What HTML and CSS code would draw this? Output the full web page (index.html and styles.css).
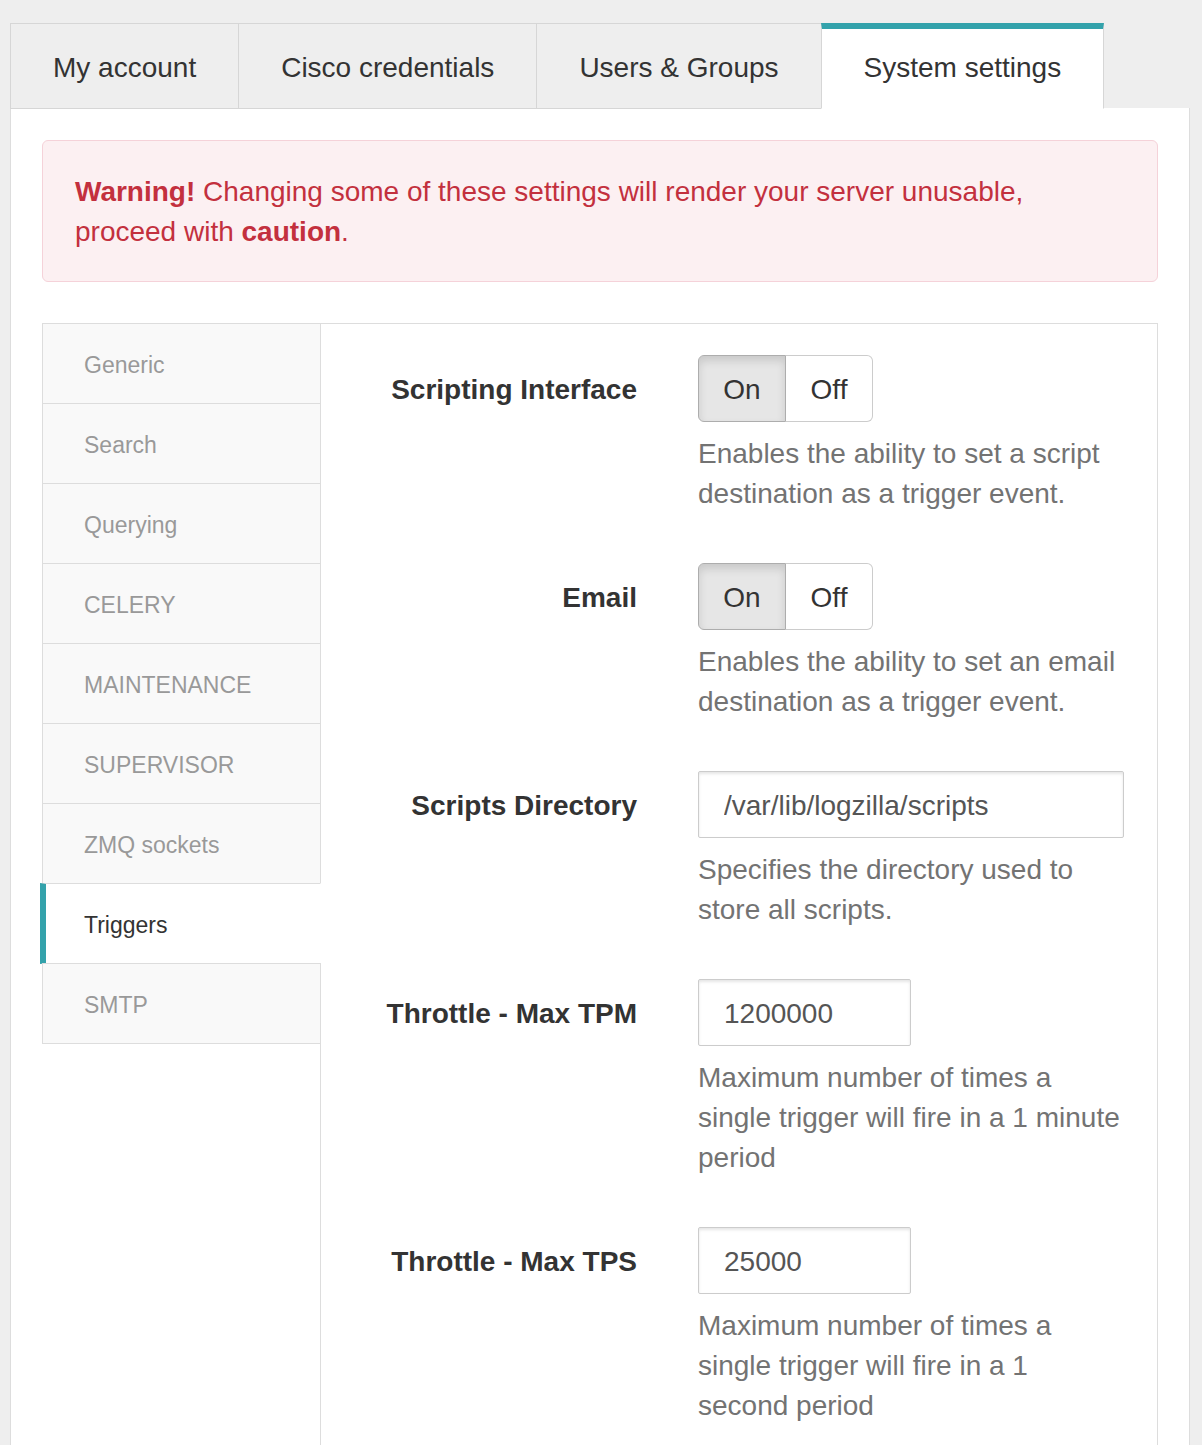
FILE: index.html
```html
<!DOCTYPE html>
<html lang="en">
<head>
<meta charset="utf-8">
<title>System settings</title>
<link rel="stylesheet" href="styles.css">
</head>
<body>
<div class="page">
  <nav class="tabs">
    <a class="tab">My account</a>
    <a class="tab">Cisco credentials</a>
    <a class="tab">Users &amp; Groups</a>
    <a class="tab active">System settings</a>
  </nav>
  <div class="panel">
    <div class="alert">
      <strong>Warning!</strong> Changing some of these settings will render your server unusable, proceed with <strong>caution</strong>.
    </div>
    <div class="settings">
      <ul class="side">
        <li class="side-item">Generic</li>
        <li class="side-item">Search</li>
        <li class="side-item">Querying</li>
        <li class="side-item">CELERY</li>
        <li class="side-item">MAINTENANCE</li>
        <li class="side-item">SUPERVISOR</li>
        <li class="side-item">ZMQ sockets</li>
        <li class="side-item active">Triggers</li>
        <li class="side-item">SMTP</li>
      </ul>
      <div class="pane">
        <div class="group">
          <label class="label">Scripting Interface</label>
          <div class="control">
            <div class="toggle">
              <span class="btn on">On</span><span class="btn">Off</span>
            </div>
            <p class="help">Enables the ability to set a script destination as a trigger event.</p>
          </div>
        </div>
        <div class="group">
          <label class="label">Email</label>
          <div class="control">
            <div class="toggle">
              <span class="btn on">On</span><span class="btn">Off</span>
            </div>
            <p class="help">Enables the ability to set an email destination as a trigger event.</p>
          </div>
        </div>
        <div class="group">
          <label class="label">Scripts Directory</label>
          <div class="control">
            <input class="input wide" type="text" value="/var/lib/logzilla/scripts">
            <p class="help">Specifies the directory used to store all scripts.</p>
          </div>
        </div>
        <div class="group">
          <label class="label">Throttle - Max TPM</label>
          <div class="control">
            <input class="input short" type="text" value="1200000">
            <p class="help">Maximum number of times a single trigger will fire in a 1 minute period</p>
          </div>
        </div>
        <div class="group">
          <label class="label">Throttle - Max TPS</label>
          <div class="control">
            <input class="input short" type="text" value="25000">
            <p class="help">Maximum number of times a single trigger will fire in a 1 second period</p>
          </div>
        </div>
      </div>
    </div>
  </div>
</div>
</body>
</html>
```

FILE: styles.css
```css
html, body {
  margin: 0;
  padding: 0;
  background: #eeeeee;
  overflow: hidden;
}
body {
  font-family: "Liberation Sans", Arial, Helvetica, sans-serif;
  font-size: 28px;
  line-height: 40px;
  color: #333333;
}
.page {
  padding: 23px 12px 0 10px;
}
.tabs {
  display: flex;
  align-items: stretch;
  height: 86px;
}
.tab {
  box-sizing: border-box;
  height: 86px;
  display: flex;
  align-items: center;
  padding: 3px 42px 0 42px;
  border: 1px solid #d6d6d6;
  margin-right: -1px;
  background: #eeeeee;
  color: #333333;
  text-decoration: none;
  white-space: nowrap;
}
.tab.active {
  background: #ffffff;
  border-top: 6px solid #33a2ab;
  border-bottom-color: #ffffff;
  padding-top: 0;
  padding-bottom: 2px;
  position: relative;
  z-index: 1;
}
.panel {
  background: #ffffff;
  border: 1px solid #dddddd;
  border-top: 0;
  padding: 32px 31px 0 31px;
  min-height: 1400px;
  margin-top: -1px;
}
.alert {
  background: #fcf0f2;
  border: 1px solid #f5d2d9;
  border-radius: 6px;
  padding: 31px 32px 29px 32px;
  color: #c3303e;
  margin-bottom: 41px;
}
.alert strong {
  font-weight: bold;
}
.settings {
  display: flex;
  align-items: stretch;
}
.side {
  list-style: none;
  margin: 0 -1px 0 0;
  padding: 0;
  width: 279px;
  flex: none;
  position: relative;
  z-index: 1;
}
.side-item {
  box-sizing: border-box;
  height: 81px;
  margin-top: -1px;
  border: 1px solid #dddddd;
  background: #f9f9f9;
  color: #999999;
  font-size: 23px;
  display: flex;
  align-items: center;
  padding: 2px 0 0 41px;
}
.side-item:first-child {
  margin-top: 0;
}
.side-item.active {
  background: #ffffff;
  color: #333333;
  border-left: 6px solid #33a2ab;
  border-right-color: #ffffff;
  margin-left: -2px;
  padding-left: 38px;
}
.pane {
  flex: 1;
  border: 1px solid #dddddd;
  border-bottom: 0;
  padding-top: 31px;
  min-height: 1200px;
}
.group {
  display: grid;
  grid-template-columns: 346px 1fr;
  margin-bottom: 30px;
}
.label {
  text-align: right;
  font-weight: bold;
  padding-right: 30px;
  padding-top: 15px;
  color: #333333;
}
.control {
  padding: 0 31px 0 31px;
}
.toggle {
  display: inline-flex;
}
.btn {
  box-sizing: border-box;
  height: 67px;
  display: inline-flex;
  align-items: center;
  justify-content: center;
  padding-top: 2px;
  border: 1px solid #cccccc;
  background: #ffffff;
  color: #333333;
  width: 87px;
}
.btn:first-child {
  border-radius: 6px 0 0 6px;
  width: 88px;
}
.btn:last-child {
  border-radius: 0 6px 6px 0;
  border-left: 0;
}
.btn.on {
  background: #e6e6e6;
  border-color: #adadad;
  box-shadow: inset 0 5px 9px rgba(0, 0, 0, 0.125);
}
.input {
  box-sizing: border-box;
  display: block;
  height: 67px;
  border: 1px solid #cccccc;
  border-radius: 2px;
  box-shadow: inset 0 2px 3px rgba(0, 0, 0, 0.1);
  padding: 2px 25px 0 25px;
  font-family: "Liberation Sans", Arial, Helvetica, sans-serif;
  font-size: 28px;
  color: #555555;
  background: #ffffff;
  margin: 0;
}
.input.wide {
  width: 426px;
}
.input.short {
  width: 213px;
}
.help {
  margin: 12px 0 19px 0;
  max-width: 423px;
  color: #737373;
}
```
